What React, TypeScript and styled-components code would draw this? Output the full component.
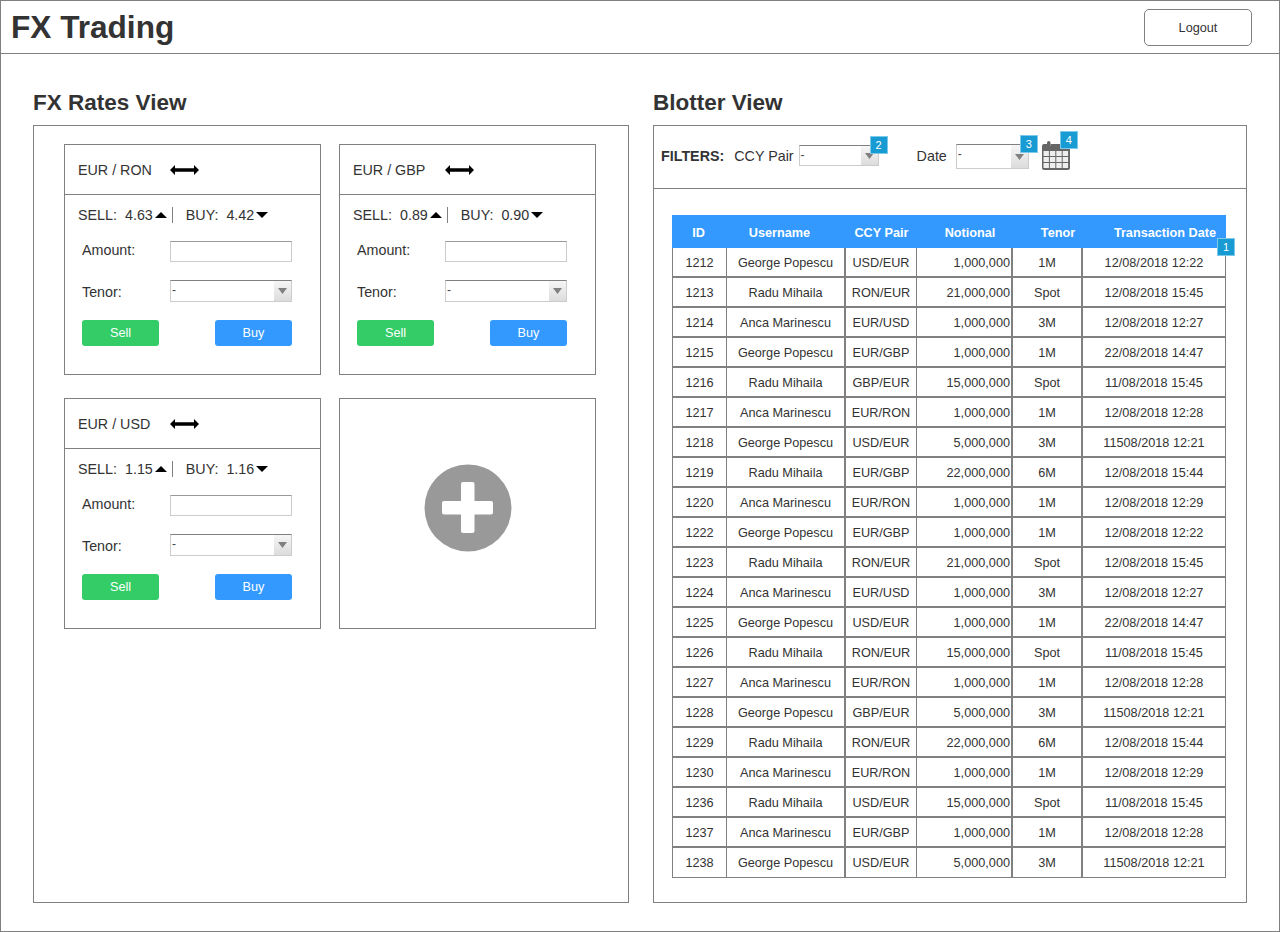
import React from "react";
import styled, { createGlobalStyle } from "styled-components";

const Global = createGlobalStyle`
  html, body { margin: 0; padding: 0; background: #fff; }
  body { font-family: "Liberation Sans", Arial, sans-serif; color: #333; }
  * { box-sizing: border-box; }
`;

const LINE = "#808080";

const Frame = styled.div`
  width: 1280px;
  height: 932px;
  border: 1px solid ${LINE};
  display: flex;
  flex-direction: column;
`;
const Header = styled.header`
  height: 53px;
  flex: none;
  border-bottom: 1px solid ${LINE};
  display: flex;
  align-items: flex-start;
  justify-content: space-between;
  padding: 8px 27px 0 10px;
`;
const Logo = styled.h1`
  margin: 0;
  font-size: 31.6px;
  line-height: 36px;
  font-weight: 700;
  color: #333;
`;
const Logout = styled.button`
  width: 108px;
  height: 37px;
  background: #fff;
  border: 1px solid ${LINE};
  border-radius: 5px;
  font: 12.7px "Liberation Sans", Arial, sans-serif;
  color: #333;
  padding: 0;
`;
const Main = styled.main`
  flex: 1;
  display: flex;
  gap: 24px;
  padding: 36px 0 0 32px;
`;
const Section = styled.section<{ $w: number }>`
  width: ${(p) => p.$w}px;
  display: flex;
  flex-direction: column;
`;
const Title = styled.h2`
  margin: 0 0 10px;
  padding-top: 1px;
  font-size: 22.5px;
  line-height: 24px;
  font-weight: 700;
  color: #333;
`;
const Panel = styled.div`
  height: 778px;
  border: 1px solid ${LINE};
`;
const CardGrid = styled.div`
  display: grid;
  grid-template-columns: 257px 257px;
  grid-auto-rows: 231px;
  column-gap: 18px;
  row-gap: 23px;
  padding: 18px 0 0 30px;
`;
const Card = styled.div`
  border: 1px solid ${LINE};
  display: flex;
  flex-direction: column;
`;
const AddCard = styled(Card)`
  align-items: center;
  justify-content: center;
  padding-bottom: 12px;
`;
const CardHead = styled.div`
  height: 50px;
  flex: none;
  border-bottom: 1px solid ${LINE};
  display: flex;
  align-items: center;
  padding-left: 13px;
  font-size: 14.3px;
`;
const PairName = styled.span`
  width: 92px;
`;
const CardBody = styled.div`
  padding: 0 28px 0 17px;
  display: flex;
  flex-direction: column;
`;
const Quote = styled.div`
  height: 40px;
  margin-left: -4px;
  display: flex;
  align-items: center;
  font-size: 14.3px;
`;
const QuoteLabel = styled.span`
  margin-right: 8px;
`;
const Sep = styled.span`
  width: 1px;
  height: 16px;
  background: ${LINE};
  margin: 0 13px 0 5px;
`;
const Tri = styled.svg`
  margin-left: 2px;
  flex: none;
`;
const Field = styled.div<{ $h: number }>`
  height: ${(p) => p.$h}px;
  display: flex;
  align-items: center;
  font-size: 14.3px;
`;
const FieldLabel = styled.label<{ $dy: number }>`
  width: 88px;
  margin-top: ${(p) => Math.max(p.$dy, 0) * 2}px;
  margin-bottom: ${(p) => Math.max(-p.$dy, 0) * 2}px;
`;
const TextBox = styled.div`
  width: 122px;
  height: 21px;
  margin-top: 2px;
  background: #fff;
  border: 1px solid #ccc;
  border-top: 1px solid #999;
`;
const SelectBox = styled.div<{ $w: number; $h: number }>`
  width: ${(p) => p.$w}px;
  height: ${(p) => p.$h}px;
  display: flex;
  background: #fff;
  border: 1px solid #ccc;
  border-top: 1px solid #808080;
  font-size: 12px;
  line-height: 18px;
  color: #444;
`;
const SelectValue = styled.span`
  flex: 1;
  padding-left: 1px;
`;
const SelectArrow = styled.span`
  width: 17px;
  display: flex;
  align-items: center;
  justify-content: center;
  background: linear-gradient(#f6f6f6, #dcdcdc);
`;
const Buttons = styled.div`
  margin-top: 4px;
  display: flex;
  justify-content: space-between;
`;
const Action = styled.button<{ $bg: string }>`
  width: 77px;
  height: 26px;
  border: 0;
  border-radius: 3px;
  padding: 0;
  background: ${(p) => p.$bg};
  color: #fff;
  font: 12.7px "Liberation Sans", Arial, sans-serif;
`;
const Filters = styled.div`
  height: 63px;
  border-bottom: 1px solid ${LINE};
  display: flex;
  align-items: flex-start;
  padding: 18px 0 0 7px;
  font-size: 14.3px;
`;
const FilterTitle = styled.strong`
  margin-right: 10px;
  line-height: 24px;
  font-size: 14.3px;
`;
const FilterLabel = styled.span<{ $mr: number; $ml?: number }>`
  margin-right: ${(p) => p.$mr}px;
  margin-left: ${(p) => p.$ml ?? 0}px;
  line-height: 24px;
`;
const SelectWrap = styled.div<{ $top: number }>`
  position: relative;
  margin-top: ${(p) => p.$top}px;
`;
const Badge = styled.span<{ $x: number; $y: number }>`
  position: absolute;
  left: ${(p) => p.$x}px;
  top: ${(p) => p.$y}px;
  width: 18px;
  height: 18px;
  background: #189ad3;
  border: 1px solid #7cc9ea;
  color: #fff;
  font-size: 11px;
  font-weight: 400;
  line-height: 16px;
  text-align: center;
  z-index: 2;
`;
const CalWrap = styled.div`
  position: relative;
  margin: -4px 0 0 13px;
  width: 28px;
  height: 31px;
`;
const TableWrap = styled.div`
  position: relative;
  margin: 26px 0 0 18px;
  width: 554px;
`;
const Grid = styled.table`
  width: 554px;
  border-collapse: separate;
  border-spacing: 0;
  table-layout: fixed;
  font-size: 12.7px;
`;
const Th = styled.th<{ $pl: number; $pr: number }>`
  height: 33px;
  padding: 2px ${(p) => p.$pr}px 0 ${(p) => p.$pl}px;
  background: #3399ff;
  color: #fff;
  font-weight: 700;
  text-align: center;
  white-space: nowrap;
`;
const Td = styled.td<{ $r: number; $right?: boolean; $first?: boolean; $last?: boolean }>`
  height: 30px;
  padding: 1px ${(p) => (p.$right ? "1px" : "0")} 0 0;
  text-align: ${(p) => (p.$right ? "right" : "center")};
  border-right: ${(p) => p.$r}px solid ${LINE};
  border-left: ${(p) => (p.$first ? `1px solid ${LINE}` : "0")};
  border-bottom: ${(p) => (p.$last ? 1 : 2)}px solid ${LINE};
  color: #333;
`;

const ArrowLR = () => (
  <svg width="29" height="10" viewBox="0 0 29 10">
    <path d="M0 5 L5 0 V3.300 H24 V0 L29 5 L24 10 V6.700 H5 V10 Z" fill="#000" />
  </svg>
);
const TriUp = () => (
  <Tri width="12" height="6" viewBox="0 0 12 6">
    <path d="M0 6 L6 0 L12 6 Z" fill="#000" />
  </Tri>
);
const TriDown = () => (
  <Tri width="12" height="6" viewBox="0 0 12 6">
    <path d="M0 0 L12 0 L6 6 Z" fill="#000" />
  </Tri>
);
const SmallTri = () => (
  <svg width="9" height="6" viewBox="0 0 9 6">
    <path d="M0 0 H9 L4.500 6 Z" fill="#808080" />
  </svg>
);
const Plus = () => (
  <svg width="88" height="88" viewBox="0 0 88 88">
    <circle cx="44" cy="44" r="43.500" fill="#999" />
    <rect x="18" y="37" width="51" height="13.500" rx="2" fill="#fff" />
    <rect x="37" y="18" width="13.500" height="51" rx="2" fill="#fff" />
  </svg>
);
const Calendar = () => (
  <svg width="28" height="31" viewBox="0 0 28 31">
    <rect x="5" y="1" width="3.500" height="8" rx="1.750" fill="#666" />
    <rect x="19" y="1" width="3.500" height="8" rx="1.750" fill="#666" />
    <path d="M2 4 H5 V6 H8.500 V4 H19 V6 H22.500 V4 H26 Q28 4 28 6 V28 Q28 30 26 30 H2 Q0 30 0 28 V6 Q0 4 2 4 Z" fill="#666" />
    <g fill="#eee">
      {[0, 1, 2].map((r) =>
        [0, 1, 2, 3].map((c) => (
          <rect key={`${r}-${c}`} x={1.5 + c * 6.4} y={11 + r * 6} width={5.4} height={5} />
        ))
      )}
    </g>
  </svg>
);

const Select = ({ w, h }: { w: number; h: number }) => (
  <SelectBox $w={w} $h={h}>
    <SelectValue>-</SelectValue>
    <SelectArrow>
      <SmallTri />
    </SelectArrow>
  </SelectBox>
);

const RateCard = ({ pair, sell, buy }: { pair: string; sell: string; buy: string }) => (
  <Card>
    <CardHead>
      <PairName>{pair}</PairName>
      <ArrowLR />
    </CardHead>
    <CardBody>
      <Quote>
        <QuoteLabel>SELL:</QuoteLabel>
        {sell}
        <TriUp />
        <Sep />
        <QuoteLabel>BUY:</QuoteLabel>
        {buy}
        <TriDown />
      </Quote>
      <Field $h={31}>
        <FieldLabel $dy={-1}>Amount:</FieldLabel>
        <TextBox />
      </Field>
      <Field $h={50}>
        <FieldLabel $dy={1}>Tenor:</FieldLabel>
        <Select w={122} h={22} />
      </Field>
      <Buttons>
        <Action $bg="#33cc66">Sell</Action>
        <Action $bg="#3399ff">Buy</Action>
      </Buttons>
    </CardBody>
  </Card>
);

const rows: string[][] = [
  ["1212", "George Popescu", "USD/EUR", "1,000,000", "1M", "12/08/2018 12:22"],
  ["1213", "Radu Mihaila", "RON/EUR", "21,000,000", "Spot", "12/08/2018 15:45"],
  ["1214", "Anca Marinescu", "EUR/USD", "1,000,000", "3M", "12/08/2018 12:27"],
  ["1215", "George Popescu", "EUR/GBP", "1,000,000", "1M", "22/08/2018 14:47"],
  ["1216", "Radu Mihaila", "GBP/EUR", "15,000,000", "Spot", "11/08/2018 15:45"],
  ["1217", "Anca Marinescu", "EUR/RON", "1,000,000", "1M", "12/08/2018 12:28"],
  ["1218", "George Popescu", "USD/EUR", "5,000,000", "3M", "11508/2018 12:21"],
  ["1219", "Radu Mihaila", "EUR/GBP", "22,000,000", "6M", "12/08/2018 15:44"],
  ["1220", "Anca Marinescu", "EUR/RON", "1,000,000", "1M", "12/08/2018 12:29"],
  ["1222", "George Popescu", "EUR/GBP", "1,000,000", "1M", "12/08/2018 12:22"],
  ["1223", "Radu Mihaila", "RON/EUR", "21,000,000", "Spot", "12/08/2018 15:45"],
  ["1224", "Anca Marinescu", "EUR/USD", "1,000,000", "3M", "12/08/2018 12:27"],
  ["1225", "George Popescu", "USD/EUR", "1,000,000", "1M", "22/08/2018 14:47"],
  ["1226", "Radu Mihaila", "RON/EUR", "15,000,000", "Spot", "11/08/2018 15:45"],
  ["1227", "Anca Marinescu", "EUR/RON", "1,000,000", "1M", "12/08/2018 12:28"],
  ["1228", "George Popescu", "GBP/EUR", "5,000,000", "3M", "11508/2018 12:21"],
  ["1229", "Radu Mihaila", "RON/EUR", "22,000,000", "6M", "12/08/2018 15:44"],
  ["1230", "Anca Marinescu", "EUR/RON", "1,000,000", "1M", "12/08/2018 12:29"],
  ["1236", "Radu Mihaila", "USD/EUR", "15,000,000", "Spot", "11/08/2018 15:45"],
  ["1237", "Anca Marinescu", "EUR/GBP", "1,000,000", "1M", "12/08/2018 12:28"],
  ["1238", "George Popescu", "USD/EUR", "5,000,000", "3M", "11508/2018 12:21"],
];
const widths = [55, 119, 71, 96, 70, 143];
const rightBorders = [1, 2, 1, 2, 2, 1];
const heads: [string, number, number][] = [
  ["ID", 0, 2],
  ["Username", 0, 14],
  ["CCY Pair", 0, 0],
  ["Notional", 10, 0],
  ["Tenor", 20, 0],
  ["Transaction Date", 21, 0],
];

export default function App() {
  return (
    <>
      <Global />
      <Frame>
        <Header>
          <Logo>FX Trading</Logo>
          <Logout>Logout</Logout>
        </Header>
        <Main>
          <Section $w={596}>
            <Title>FX Rates View</Title>
            <Panel>
              <CardGrid>
                <RateCard pair="EUR / RON" sell="4.63" buy="4.42" />
                <RateCard pair="EUR / GBP" sell="0.89" buy="0.90" />
                <RateCard pair="EUR / USD" sell="1.15" buy="1.16" />
                <AddCard>
                  <Plus />
                </AddCard>
              </CardGrid>
            </Panel>
          </Section>
          <Section $w={594}>
            <Title>Blotter View</Title>
            <Panel>
              <Filters>
                <FilterTitle>FILTERS:</FilterTitle>
                <FilterLabel $mr={5}>CCY Pair</FilterLabel>
                <SelectWrap $top={1}>
                  <Select w={80} h={21} />
                  <Badge $x={71} $y={-9}>2</Badge>
                </SelectWrap>
                <FilterLabel $mr={9} $ml={38}>Date</FilterLabel>
                <SelectWrap $top={0}>
                  <Select w={73} h={25} />
                  <Badge $x={64} $y={-9}>3</Badge>
                </SelectWrap>
                <CalWrap>
                  <Calendar />
                  <Badge $x={18} $y={-9}>4</Badge>
                </CalWrap>
              </Filters>
              <TableWrap>
                <Grid>
                  <colgroup>
                    {widths.map((w, i) => (
                      <col key={i} style={{ width: w }} />
                    ))}
                  </colgroup>
                  <thead>
                    <tr>
                      {heads.map(([h, pl, pr]) => (
                        <Th key={h} $pl={pl} $pr={pr}>{h}</Th>
                      ))}
                    </tr>
                  </thead>
                  <tbody>
                    {rows.map((r, ri) => (
                      <tr key={ri}>
                        {r.map((c, ci) => (
                          <Td
                            key={ci}
                            $r={rightBorders[ci]}
                            $right={ci === 3}
                            $first={ci === 0}
                            $last={ri === rows.length - 1}
                          >
                            {c}
                          </Td>
                        ))}
                      </tr>
                    ))}
                  </tbody>
                </Grid>
                <Badge $x={545} $y={23}>1</Badge>
              </TableWrap>
            </Panel>
          </Section>
        </Main>
      </Frame>
    </>
  );
}
